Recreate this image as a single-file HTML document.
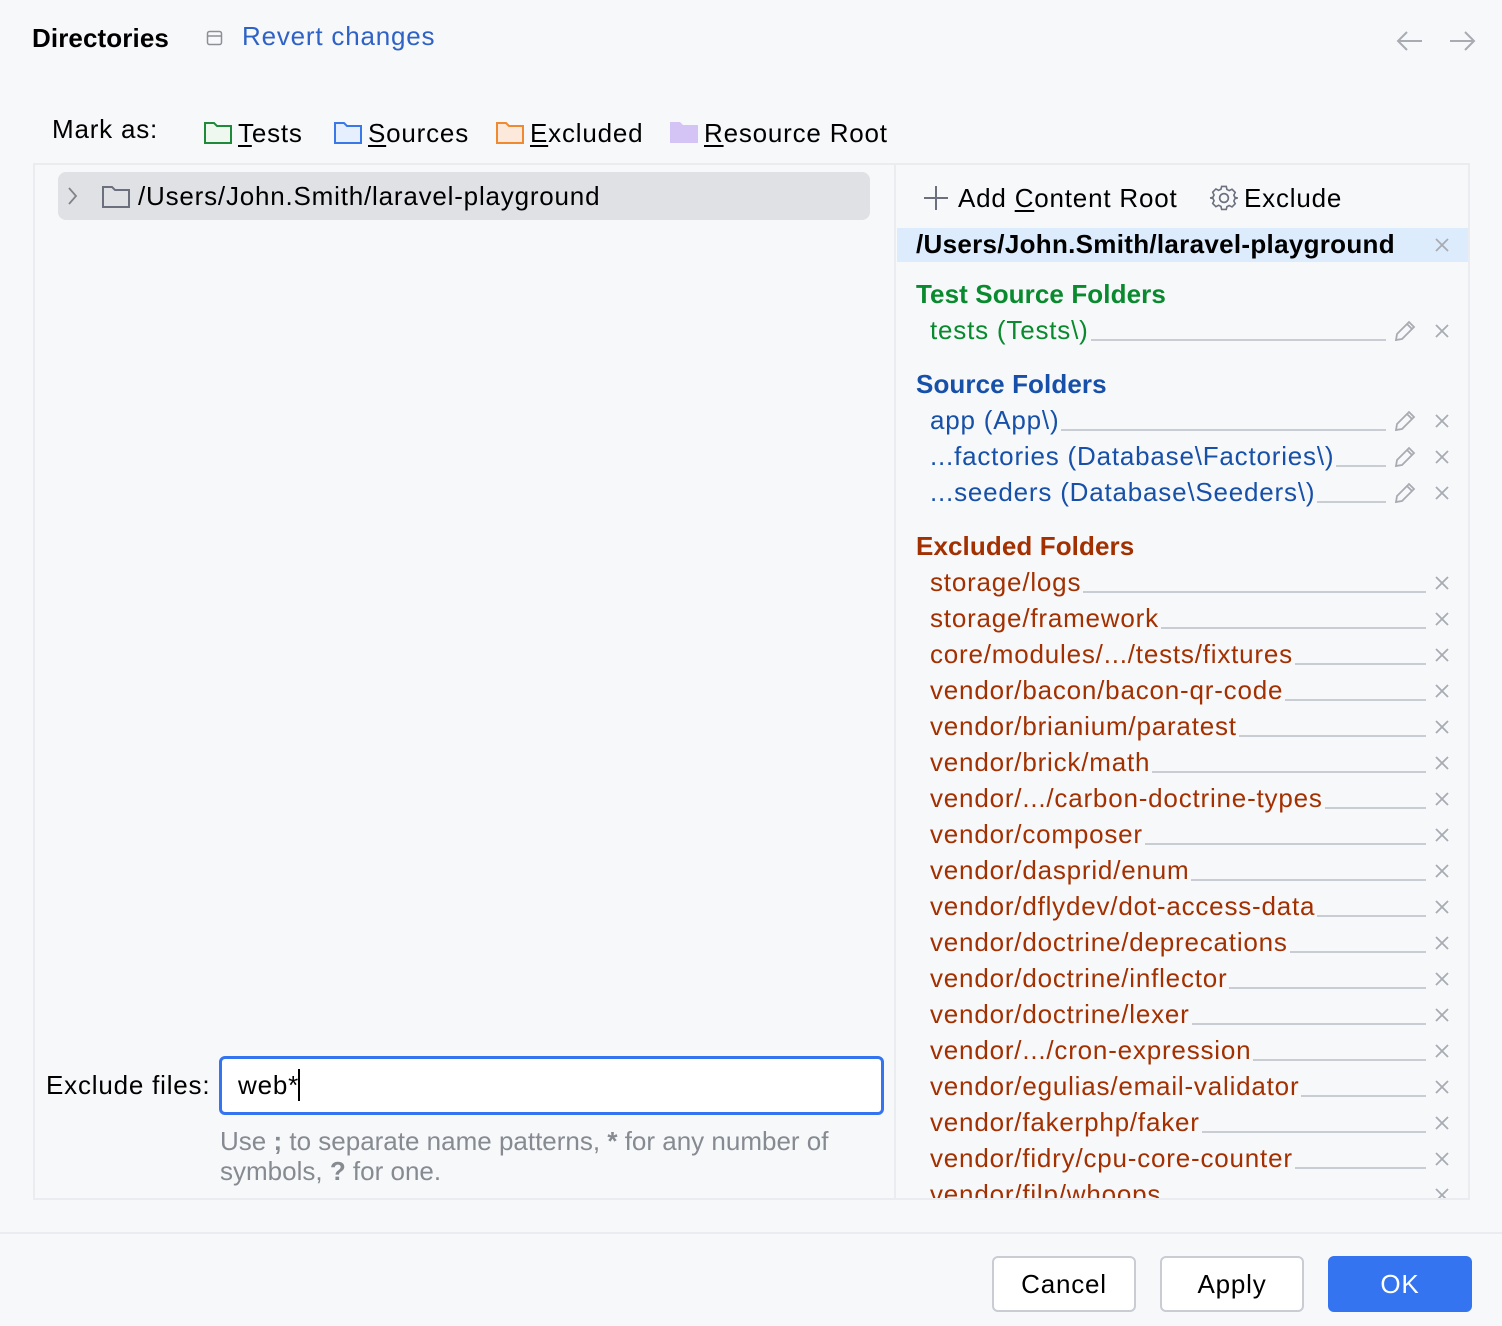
<!DOCTYPE html>
<html><head><meta charset="utf-8"><style>
*{margin:0;padding:0;box-sizing:border-box}
body{width:1502px;height:1326px;background:#f7f8fa;font-family:"Liberation Sans",sans-serif;font-size:26px;letter-spacing:0.8px;color:#000;position:relative;overflow:hidden}
svg{display:block}
.a{position:absolute;white-space:nowrap}
.bd{font-weight:bold;letter-spacing:0.1px}
u{text-decoration:underline;text-underline-offset:3px}
.row{position:absolute;left:930px;width:496px;height:36px;display:flex;align-items:flex-end}
.row span{white-space:nowrap;line-height:30px}
.row i{flex:1;border-bottom:2px solid #c9ccd3;margin-bottom:4px;margin-left:2px}
.x{position:absolute;left:1434px;width:16px;height:16px}
.pen{position:absolute;left:1392px;width:26px;height:26px}
.ex{color:#a33000}
.src{color:#1750a8}
.tst{color:#0a8a2e}
.btn{position:absolute;top:1256px;width:144px;height:56px;border:2px solid #c9ccd3;border-radius:6px;background:#fff;display:flex;align-items:center;justify-content:center}
</style></head><body>
<div class="a bd" style="left:32px;top:23px">Directories</div>
<svg class="a" style="left:206px;top:29px" width="18" height="18"><rect x="1.5" y="2.5" width="14" height="13" rx="2" fill="none" stroke="#8c8f96" stroke-width="1.5"/><line x1="2" y1="7" x2="15" y2="7" stroke="#8c8f96" stroke-width="1.5"/></svg>
<div class="a" style="left:242px;top:21px;color:#2f62c6">Revert changes</div>
<svg class="a" style="left:1396px;top:30px" width="28" height="22"><path d="M26 11H2M11 2L2 11l9 9" fill="none" stroke="#a8abb2" stroke-width="2"/></svg>
<svg class="a" style="left:1448px;top:30px" width="28" height="22"><path d="M2 11h24M17 2l9 9-9 9" fill="none" stroke="#a8abb2" stroke-width="2"/></svg>

<div class="a" style="left:52px;top:114px">Mark as:</div>
<svg class="a" style="left:203px;top:119px" width="30" height="26"><path d="M2 4h9l3 3h14v17H2z" fill="#eef8ee" stroke="#1f8a3b" stroke-width="2"/></svg>
<div class="a" style="left:238px;top:118px"><u>T</u>ests</div>
<svg class="a" style="left:333px;top:119px" width="30" height="26"><path d="M2 4h9l3 3h14v17H2z" fill="#e6effd" stroke="#3b78e7" stroke-width="2"/></svg>
<div class="a" style="left:368px;top:118px"><u>S</u>ources</div>
<svg class="a" style="left:495px;top:119px" width="30" height="26"><path d="M2 4h9l3 3h14v17H2z" fill="#fde9dc" stroke="#f08a30" stroke-width="2"/></svg>
<div class="a" style="left:530px;top:118px"><u>E</u>xcluded</div>
<svg class="a" style="left:669px;top:119px" width="30" height="26"><path d="M1 3h10l3 3h15v18H1z" fill="#d3c4f5"/></svg>
<div class="a" style="left:704px;top:118px"><u>R</u>esource Root</div>

<div class="a" style="left:33px;top:163px;width:1437px;height:1037px;border:2px solid #ebecf0"></div>
<div class="a" style="left:894px;top:164px;width:2px;height:1035px;background:#ebecf0"></div>

<div class="a" style="left:58px;top:172px;width:812px;height:48px;background:#dfe1e5;border-radius:8px"></div>
<svg class="a" style="left:66px;top:186px" width="14" height="20"><path d="M3 2l7 8-7 8" fill="none" stroke="#80838a" stroke-width="1.8"/></svg>
<svg class="a" style="left:101px;top:183px" width="30" height="26"><path d="M2 4h9l3 3h14v17H2z" fill="none" stroke="#6c707e" stroke-width="2"/></svg>
<div class="a" style="left:138px;top:181px">/Users/John.Smith/laravel-playground</div>

<div class="a" style="left:46px;top:1070px">Exclude files:</div>
<div class="a" style="left:219px;top:1056px;width:665px;height:59px;border:3px solid #3574f0;border-radius:6px;background:#fff"></div>
<div class="a" style="left:238px;top:1069px">web*<span style="display:inline-block;width:2px;height:32px;background:#000;vertical-align:-7px;margin-left:-1px"></span></div>
<div class="a" style="left:220px;top:1126px;color:#868a91;line-height:30px;letter-spacing:0">Use <b>;</b> to separate name patterns, <b>*</b> for any number of<br>symbols, <b>?</b> for one.</div>

<svg class="a" style="left:922px;top:184px" width="28" height="28"><path d="M14 2v24M2 14h24" stroke="#6c707e" stroke-width="2"/></svg>
<div class="a" style="left:958px;top:183px">Add <u>C</u>ontent Root</div>
<svg class="a" style="left:1209px;top:183px" width="30" height="30" viewBox="0 0 24 24"><path d="M10 2h4l.6 2.6 2 1 2.4-1.2 2.8 2.8-1.2 2.4 1 2L24 12v0l-2.4.6-1 2 1.2 2.4-2.8 2.8-2.4-1.2-2 1L14 22h-4l-.6-2.6-2-1-2.4 1.2-2.8-2.8 1.2-2.4-1-2L0 12l2.4-.6 1-2L2.2 7 5 4.2l2.4 1.2 2-1z" fill="none" stroke="#6c707e" stroke-width="1.4" transform="scale(.92) translate(1 1)"/><circle cx="12" cy="12" r="3.5" fill="none" stroke="#6c707e" stroke-width="1.4"/></svg>
<div class="a" style="left:1244px;top:183px">Exclude</div>

<div class="a" style="left:897px;top:228px;width:571px;height:34px;background:#dcecfd"></div>
<div class="a bd" style="left:916px;top:229px;letter-spacing:0.3px">/Users/John.Smith/laravel-playground</div>

<div class="a tst bd" style="left:916px;top:279px">Test Source Folders</div>
<div class="a src bd" style="left:916px;top:369px">Source Folders</div>
<div class="a ex bd" style="left:916px;top:531px">Excluded Folders</div>

<div id="rows"></div>
<div class="a" style="left:0;top:1198px;width:1502px;height:35px;background:#f7f8fa"></div>
<div class="a" style="left:0;top:1232px;width:1502px;height:2px;background:#ebecf0"></div>
<div class="a" style="left:33px;top:1198px;width:1437px;height:2px;background:#ebecf0"></div>

<div class="btn" style="left:992px">Cancel</div>
<div class="btn" style="left:1160px">Apply</div>
<div class="btn" style="left:1328px;background:#3574f0;border-color:#3574f0;color:#fff">OK</div>

<script>
var X='<svg width="16" height="16"><path d="M2 2l12 12M14 2L2 14" stroke="#a8abb2" stroke-width="1.8"/></svg>';
var P='<svg width="26" height="26"><path d="M4 22l1-6L17 4l5 5-12 12z M15 6l5 5" fill="none" stroke="#a8abb2" stroke-width="1.8"/></svg>';
var h='';
function row(t,y,c,pen){
 var w=pen?456:496;
 h+='<div class="row '+c+'" style="top:'+(y-22)+'px;width:'+w+'px"><span>'+t+'</span><i></i></div>';
 if(pen) h+='<div class="pen" style="top:'+(y-13)+'px">'+P+'</div>';
 h+='<div class="x" style="top:'+(y-8)+'px">'+X+'</div>';
}
h+='<div class="x" style="top:237px">'+X+'</div>';
row('tests (Tests\\)',331,'tst',1);
row('app (App\\)',421,'src',1);
row('...factories (Database\\Factories\\)',457,'src',1);
row('...seeders (Database\\Seeders\\)',493,'src',1);
var ex=['storage/logs','storage/framework','core/modules/.../tests/fixtures','vendor/bacon/bacon-qr-code','vendor/brianium/paratest','vendor/brick/math','vendor/.../carbon-doctrine-types','vendor/composer','vendor/dasprid/enum','vendor/dflydev/dot-access-data','vendor/doctrine/deprecations','vendor/doctrine/inflector','vendor/doctrine/lexer','vendor/.../cron-expression','vendor/egulias/email-validator','vendor/fakerphp/faker','vendor/fidry/cpu-core-counter','vendor/filp/whoops'];
ex.forEach(function(t,i){row(t,583+36*i,'ex',0)});
document.getElementById('rows').innerHTML=h;
</script>
</body></html>
